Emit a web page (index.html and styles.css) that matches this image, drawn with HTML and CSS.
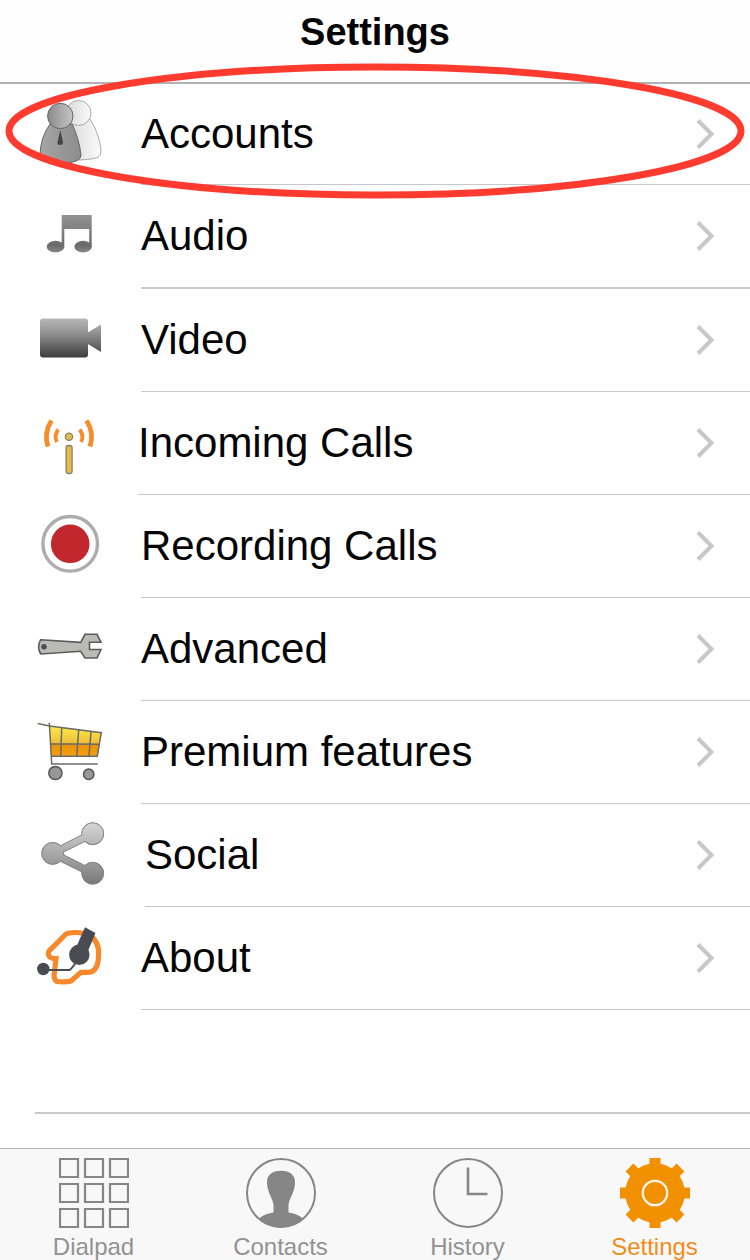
FILE: index.html
```html
<!DOCTYPE html>
<html lang="en">
<head>
<meta charset="utf-8">
<meta name="viewport" content="width=device-width, initial-scale=1">
<title>Settings</title>
<link rel="stylesheet" href="styles.css">
</head>
<body class="app">
<header class="navbar"><h1 class="navbar-title">Settings</h1></header>
<main class="content">
<ul class="list">
  <li class="item item-first">
    <a class="row" href="#accounts">
      <svg class="icon" viewBox="0 0 70 70" aria-hidden="true">
        <defs>
          <linearGradient id="light"><stop offset="0" stop-color="#d8d8d8"/><stop offset="1" stop-color="#fafafa"/></linearGradient>
          <linearGradient id="dark"><stop offset="0" stop-color="#8a8a8a"/><stop offset="1" stop-color="#c6c6c6"/></linearGradient>
          <linearGradient id="suit"><stop offset="0" stop-color="#a6a6a6"/><stop offset="1" stop-color="#8c8c8c"/></linearGradient>
        </defs>
        <path d="M34 25L55 19Q64 33 66 50Q66 57 61 58Q53 60 44 60H30Z" fill="url(#light)" stroke="#aaa"/>
        <circle cx="43.5" cy="13" r="12.500" fill="url(#light)" stroke="#aaa"/>
        <path d="M15 24Q5 38 5 56Q6 60 12 61Q20 64 31 63Q46 62 46 55Q44 38 37 24Z" fill="url(#suit)" stroke="#666"/>
        <circle cx="25.3" cy="16" r="12.7" fill="url(#dark)" stroke="#666"/>
        <path d="M25.3 30L28 42Q28 45 25.3 45Q22 45 22.6 42Z" fill="#444"/>
      </svg>
      <span class="body"><span class="label">Accounts</span><svg class="chevron" viewBox="0 0 20 30" aria-hidden="true"><path d="M3 1.5L16.5 15L3 28.5"/></svg></span>
    </a>
    <svg class="marker" aria-hidden="true"><ellipse cx="50%" cy="50%" rx="50%" ry="50%"/></svg>
  </li>
  <li class="item">
    <a class="row row-thick" href="#audio">
      <svg class="icon" viewBox="0 0 70 70" aria-hidden="true">
        <defs><linearGradient id="note" gradientUnits="userSpaceOnUse" x1="0" y1="14" x2="0" y2="52"><stop offset="0" stop-color="#939393"/><stop offset=".4" stop-color="#808080"/><stop offset=".8" stop-color="#6a6a6a"/><stop offset="1" stop-color="#8a8a8a"/></linearGradient></defs>
        <g fill="url(#note)"><path d="M26.700 14H56.700V46H54.200V28H29.300V46H26.700Z"/><ellipse cx="20.500" cy="45.700" rx="8.800" ry="5.900"/><ellipse cx="48.100" cy="45.700" rx="8.700" ry="5.900"/></g>
      </svg>
      <span class="body"><span class="label">Audio</span><svg class="chevron" viewBox="0 0 20 30" aria-hidden="true"><path d="M3 1.5L16.5 15L3 28.5"/></svg></span>
    </a>
  </li>
  <li class="item">
    <a class="row" href="#video">
      <svg class="icon" viewBox="0 0 70 70" aria-hidden="true">
        <defs><linearGradient id="cam" gradientUnits="userSpaceOnUse" x1="0" y1="13" x2="0" y2="53"><stop offset="0" stop-color="#b8b8b8"/><stop offset=".35" stop-color="#949494"/><stop offset="1" stop-color="#3c3c3c"/></linearGradient></defs>
        <rect x="5" y="13.500" width="48" height="39" rx="3" fill="url(#cam)"/><path d="M52 28L66 19.500V47L52 38.500Z" fill="url(#cam)"/>
      </svg>
      <span class="body"><span class="label">Video</span><svg class="chevron" viewBox="0 0 20 30" aria-hidden="true"><path d="M3 1.5L16.5 15L3 28.5"/></svg></span>
    </a>
  </li>
  <li class="item">
    <a class="row row-incoming" href="#incoming">
      <svg class="icon" viewBox="0 0 70 70" aria-hidden="true">
        <g fill="none" stroke="#f98b2a"><path stroke-width="4.800" d="M16.500 12.500Q8.500 25 13 38.500M51.500 12.500Q59.500 25 55 38.500"/><path stroke-width="3.800" d="M23.300 21.500Q18.500 28 22 34M44.700 21.500Q49.500 28 46 34"/></g>
        <g fill="#e5bd45" stroke="#85816f" stroke-width="1.300"><circle cx="34" cy="28.800" r="3.600"/><rect x="31.100" y="37.500" width="6" height="28" rx="2.500"/></g>
      </svg>
      <span class="body"><span class="label">Incoming Calls</span><svg class="chevron" viewBox="0 0 20 30" aria-hidden="true"><path d="M3 1.5L16.5 15L3 28.5"/></svg></span>
    </a>
  </li>
  <li class="item">
    <a class="row" href="#recording">
      <svg class="icon" viewBox="0 0 70 70" aria-hidden="true">
        <circle cx="35.200" cy="32.800" r="27.300" fill="#fff" stroke="#adadad" stroke-width="3.400"/><circle cx="35.200" cy="32.800" r="19.300" fill="#c1272d"/>
      </svg>
      <span class="body"><span class="label">Recording Calls</span><svg class="chevron" viewBox="0 0 20 30" aria-hidden="true"><path d="M3 1.5L16.5 15L3 28.5"/></svg></span>
    </a>
  </li>
  <li class="item">
    <a class="row" href="#advanced">
      <svg class="icon" viewBox="0 0 70 70" aria-hidden="true">
        <path d="M5.700 25.700L45.700 28.300L50 20.300H62L66 28.300H54.500V35.500H66L62 44H50L45.700 37.300L5.700 40Q1.500 33 5.700 25.700Z" fill="#babbb5" stroke="#5c5c5c" stroke-width="1.600"/><circle cx="9" cy="32.800" r="2.700" fill="#4a4a4a"/>
      </svg>
      <span class="body"><span class="label">Advanced</span><svg class="chevron" viewBox="0 0 20 30" aria-hidden="true"><path d="M3 1.5L16.5 15L3 28.5"/></svg></span>
    </a>
  </li>
  <li class="item">
    <a class="row" href="#premium">
      <svg class="icon" viewBox="0 0 70 70" aria-hidden="true">
        <defs><linearGradient id="basket" gradientUnits="userSpaceOnUse" x1="0" y1="9" x2="0" y2="39"><stop offset="0" stop-color="#fcec4f"/><stop offset=".58" stop-color="#edbd36"/><stop offset=".62" stop-color="#e89210"/><stop offset=".85" stop-color="#f09a05"/><stop offset="1" stop-color="#fa9d20"/></linearGradient></defs>
        <path d="M14.500 9L66.300 15.700L62.300 39.300H16Z" fill="url(#basket)"/>
        <path d="M2.700 6.500L14.500 9L66.300 15.700L62.300 39.300H16M14.300 5.700L16.700 47H62.700M26.700 10.500L25.700 39M43.700 12.700L41.700 39.300M56 14.300L54 39.300M15 26.700L64.300 27.300" fill="none" stroke="#6a6a66" stroke-width="1.500"/>
        <g fill="#979797" stroke="#555" stroke-width="1.500"><circle cx="20.400" cy="56" r="6.600"/><circle cx="53.700" cy="57.300" r="5.200"/></g>
      </svg>
      <span class="body"><span class="label">Premium features</span><svg class="chevron" viewBox="0 0 20 30" aria-hidden="true"><path d="M3 1.5L16.5 15L3 28.5"/></svg></span>
    </a>
  </li>
  <li class="item">
    <a class="row row-social" href="#social">
      <svg class="icon" viewBox="0 0 70 70" aria-hidden="true">
        <defs><linearGradient id="share" gradientUnits="userSpaceOnUse" x1="0" y1="3" x2="0" y2="65"><stop offset="0" stop-color="#d6d6d6"/><stop offset="1" stop-color="#787878"/></linearGradient></defs>
        <g fill="#808080" stroke="#808080"><circle cx="57.700" cy="13.700" r="11"/><circle cx="17.700" cy="33.400" r="11"/><circle cx="57.700" cy="53.300" r="11"/><path fill="none" stroke-width="8" d="M57.700 13.700L17.700 33.400L57.700 53.300"/></g>
        <g fill="url(#share)"><circle cx="57.700" cy="13.700" r="10.500"/><circle cx="17.700" cy="33.400" r="10.500"/><circle cx="57.700" cy="53.300" r="10.500"/><path fill="none" stroke="url(#share)" stroke-width="6.400" d="M57.700 13.700L17.700 33.400L57.700 53.300"/></g>
      </svg>
      <span class="body"><span class="label">Social</span><svg class="chevron" viewBox="0 0 20 30" aria-hidden="true"><path d="M3 1.5L16.5 15L3 28.5"/></svg></span>
    </a>
  </li>
  <li class="item">
    <a class="row" href="#about">
      <svg class="icon" viewBox="0 0 70 70" aria-hidden="true">
        <path d="M32 10.500Q41 8.500 49 10.500Q61 13 63.500 26Q65 49 53 49.300H46L36 58Q31 59.500 22 58.500Q18 56 19.500 49L21 35.500Q14 36 13.300 31Q13 28.500 16 26L28 14Q30 11.500 32 10.500Z" fill="none" stroke="#f9882a" stroke-width="5.200"/>
        <circle cx="44.300" cy="31.700" r="10.200" fill="#494b53"/><path d="M39.500 28L50 4.200L60.500 10L50 35Z" fill="#494b53"/><circle cx="8.300" cy="46" r="6.200" fill="#494b53"/><path d="M8 47H34.500Q36 46.500 40.500 40" fill="none" stroke="#494b53" stroke-width="2"/>
      </svg>
      <span class="body"><span class="label">About</span><svg class="chevron" viewBox="0 0 20 30" aria-hidden="true"><path d="M3 1.5L16.5 15L3 28.5"/></svg></span>
    </a>
  </li>
  <li class="item item-empty" aria-hidden="true"></li>
</ul>
</main>
<nav class="tabbar">
  <a class="tab" href="#dialpad">
    <svg class="tab-icon" viewBox="0 0 70 70" aria-hidden="true"><path fill="none" stroke="currentColor" stroke-width="2.200" d="M1 1h18v18h-18zM26 1h18v18h-18zM51 1h18v18h-18zM1 26h18v18h-18zM26 26h18v18h-18zM51 26h18v18h-18zM1 51h18v18h-18zM26 51h18v18h-18zM51 51h18v18h-18z"/></svg>
    <span class="tab-label">Dialpad</span>
  </a>
  <a class="tab" href="#contacts">
    <svg class="tab-icon" viewBox="0 0 70 70" aria-hidden="true"><circle cx="35" cy="35" r="34" fill="none" stroke="currentColor" stroke-width="2"/><path fill="currentColor" d="M35 12.700C44 12.700 49 17 49 24C49 35 43 40 42.500 47V54.500Q51 55.500 57 60.500Q47 69.500 35 69.500Q23 69.500 13 60.500Q19 55.500 27.500 54.500V47C27 40 21 35 21 24C21 17 26 12.700 35 12.700Z"/></svg>
    <span class="tab-label">Contacts</span>
  </a>
  <a class="tab" href="#history">
    <svg class="tab-icon" viewBox="0 0 70 70" aria-hidden="true"><g fill="none" stroke="currentColor"><circle cx="35" cy="35" r="34" stroke-width="2"/><path stroke-width="2.600" d="M35 9.500V36H54.500"/></g></svg>
    <span class="tab-label">History</span>
  </a>
  <a class="tab tab-active" href="#settings" aria-current="page">
    <svg class="tab-icon" viewBox="0 0 70 70" aria-hidden="true"><circle cx="35" cy="35" r="29.800" fill="currentColor"/><path stroke="currentColor" stroke-width="11" d="M35 0V70M0 35H70M9.500 9.500L60.500 60.500M9.500 60.500L60.500 9.500"/><circle cx="35" cy="35" r="12.200" fill="none" stroke="#f8f4ec" stroke-width="2.300"/></svg>
    <span class="tab-label">Settings</span>
  </a>
</nav>
</body>
</html>
```
FILE: styles.css
```css
* {
  box-sizing: border-box;
}

.app {
  margin: 0;
  min-height: 100vh;
  display: flex;
  flex-direction: column;
  background: #fff;
  color: #050505;
  font-family: "Liberation Sans", Arial, sans-serif;
}

.navbar {
  padding: 9px 16px 27px;
  background: #fefefe;
  border-bottom: 2px solid #b2b2b2;
  text-align: center;
}

.navbar-title {
  margin: 0;
  font-size: 38px;
  line-height: 46px;
  font-weight: bold;
}

.content {
  flex: 1;
}

.list {
  margin: 0;
  padding: 0;
  list-style: none;
}

.item-first {
  position: relative;
}

.row {
  display: flex;
  align-items: flex-start;
  gap: 36px;
  padding-left: 35px;
  color: inherit;
  text-decoration: none;
}

.row-incoming {
  gap: 33px;
}

.row-social {
  gap: 40px;
}

.icon {
  flex: none;
  width: 70px;
  height: 70px;
  margin-top: 16px;
}

.body {
  flex: 1;
  display: flex;
  align-items: center;
  justify-content: space-between;
  min-height: 103px;
  padding-right: 35px;
  padding-bottom: 1px;
  border-bottom: 1px solid #c8c7cc;
}

.item-first .body {
  min-height: 101px;
}

.row-thick .body {
  min-height: 104px;
  border-bottom-width: 2px;
}

.label {
  font-size: 42px;
  line-height: 48px;
}

.chevron {
  flex: none;
  width: 20px;
  height: 30px;
  fill: none;
  stroke: #c7c7cc;
  stroke-width: 4;
}

.marker {
  position: absolute;
  top: -17px;
  left: 9px;
  width: calc(100% - 18px);
  height: 128px;
  overflow: visible;
  pointer-events: none;
  fill: none;
  stroke: #ff3b30;
  stroke-width: 7;
}

.item-empty {
  height: 104px;
  margin-left: 35px;
  border-bottom: 2px solid #c8c7cc;
}

.tabbar {
  display: grid;
  grid-template-columns: repeat(4, 1fr);
  padding: 9px 2px 1px 0;
  background: #f8f8f8;
  border-top: 1px solid #b2b2b2;
}

.tab {
  display: flex;
  flex-direction: column;
  align-items: center;
  gap: 7px;
  color: #868686;
  text-decoration: none;
}

.tab-icon {
  width: 70px;
  height: 70px;
}

.tab-label {
  font-size: 24px;
  line-height: 24px;
  color: #929292;
}

.tab-active {
  color: #f29100;
}

.tab-active .tab-label {
  color: #f08c1a;
}
```
